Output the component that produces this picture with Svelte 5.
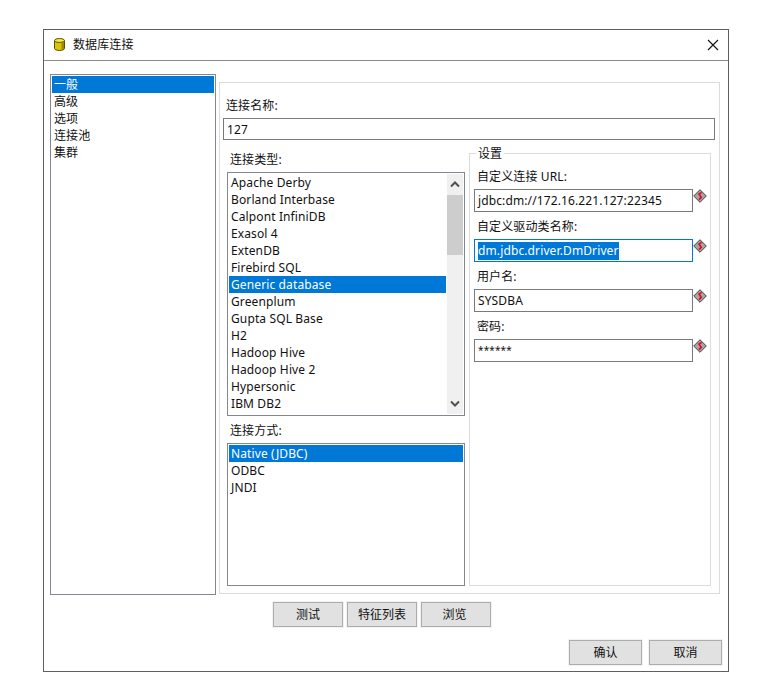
<script>
  const sections = ['一般', '高级', '选项', '连接池', '集群'];
  const drivers = ['Apache Derby','Borland Interbase','Calpont InfiniDB','Exasol 4','ExtenDB','Firebird SQL','Generic database','Greenplum','Gupta SQL Base','H2','Hadoop Hive','Hadoop Hive 2','Hypersonic','IBM DB2'];
  const methods = ['Native (JDBC)','ODBC','JNDI'];
  const fields = [
    { label: '自定义连接 URL:', value: 'jdbc:dm://172.16.221.127:22345' },
    { label: '自定义驱动类名称:', value: 'dm.jdbc.driver.DmDriver', active: true },
    { label: '用户名:', value: 'SYSDBA' },
    { label: '密码:', value: '******', mask: true }
  ];
</script>

<div class="window">
  <header class="title">
    <svg class="dbicon" width="11" height="13" viewBox="0 0 11 13">
      <path d="M.5 2.5v8c0 1.1 2.2 2 5 2s5-.9 5-2v-8z" fill="#dcc400" stroke="#5a5000" stroke-width="1"/>
      <path d="M7.5 4.5h2.5v6c0 .8-1 1.3-2.5 1.6z" fill="#9a8a00"/>
      <ellipse cx="5.5" cy="2.5" rx="5" ry="2" fill="#f7ea3a" stroke="#5a5000" stroke-width="1"/>
    </svg>
    <span>数据库连接</span>
    <svg class="close" width="12" height="12" viewBox="0 0 12 12">
      <path d="M1 1l10 10M11 1L1 11" stroke="#111" stroke-width="1.1" fill="none"/>
    </svg>
  </header>

  <div class="main">
    <ul class="list nav">
      {#each sections as s, i}
        <li class:sel={i === 0}>{s}</li>
      {/each}
    </ul>

    <section class="panel">
      <div class="namelabel">连接名称:</div>
      <div class="input nameinput">127</div>

      <div class="cols">
        <div class="leftcol">
          <div class="lab typelabel">连接类型:</div>
          <div class="list drivers">
            <ul>
              {#each drivers as d}
                <li class:sel={d === 'Generic database'}>{d}</li>
              {/each}
            </ul>
            <div class="scrollbar">
              <svg width="16" height="21" viewBox="0 0 16 21"><path d="M4 12.5l4-4 4 4" stroke="#505050" stroke-width="2" fill="none"/></svg>
              <div class="track"><div class="thumb"></div></div>
              <svg width="16" height="21" viewBox="0 0 16 21"><path d="M4 8.5l4 4 4-4" stroke="#505050" stroke-width="2" fill="none"/></svg>
            </div>
          </div>
          <div class="lab methodlabel">连接方式:</div>
          <ul class="list methods">
            {#each methods as m, i}
              <li class:sel={i === 0}>{m}</li>
            {/each}
          </ul>
        </div>

        <div class="group">
          <div class="legend">设置</div>
          {#each fields as f}
            <div class="field">
              <div class="flabel">{f.label}</div>
              <div class="frow">
                <div class="input" class:active={f.active} class:mask={f.mask}>
                  {#if f.active}<span class="selected">{f.value}</span>{:else}{f.value}{/if}
                </div>
                <svg class="req" width="14" height="14" viewBox="0 0 14 14">
                  <path d="M7 .7L13.3 7 7 13.3.7 7z" fill="#a6a6a6" stroke="#404040" stroke-width="1"/>
                  <path d="M8.6 3.4L6 5l2.2 3.4L6 10.6" fill="none" stroke="#d8121e" stroke-width="1.7"/>
                </svg>
              </div>
            </div>
          {/each}
        </div>
      </div>
    </section>
  </div>

  <div class="tools">
    <button>测试</button>
    <button>特征列表</button>
    <button>浏览</button>
  </div>

  <div class="footer">
    <button>确认</button>
    <button>取消</button>
  </div>
</div>

<style>
  :global(body) { margin: 0; background: #fff; }
  * { box-sizing: border-box; }
  ul { list-style: none; margin: 0; padding: 0; }
  .window {
    margin: 29px 0 0 43px;
    width: 686px;
    height: 643px;
    border: 1px solid #5f5f5f;
    background: #fff;
    font: 12px/17px "Noto Sans", "Noto Sans CJK SC", sans-serif;
    letter-spacing: .12px;
    color: #111;
    display: flex;
    flex-direction: column;
  }
  .title {
    height: 31px;
    flex: none;
    border-bottom: 1px solid #8c8c8c;
    display: flex;
    align-items: center;
    padding: 0 9px 1px 10px;
    gap: 8px;
  }
  .title span { flex: 1; }
  .dbicon { flex: none; }
  .main {
    display: flex;
    gap: 3px;
    padding: 13px 0 0 6px;
    height: 534px;
    flex: none;
    align-items: flex-start;
  }
  .list { border: 1px solid #828790; background: #fff; padding: 1px; }
  .nav { width: 166px; height: 521px; }
  .nav li { padding-left: 2px; height: 17px; }
  .sel { background: #0078d7; color: #fff; }
  .panel {
    width: 501px;
    height: 512px;
    margin-top: 8px;
    border: 1px solid #dcdcdc;
    padding: 13px 4px 0 3px;
  }
  .namelabel { padding-left: 3px; height: 22px; padding-top: 1px; }
  .input {
    border: 1px solid #7a7a7a;
    height: 23px;
    line-height: 22px;
    padding-left: 3px;
    white-space: nowrap;
    overflow: hidden;
    color: #111;
  }
  .nameinput { width: 492px; height: 22px; line-height: 21px; }
  .cols { display: flex; gap: 4px; padding-left: 4px; margin-top: 11px; }
  .leftcol { width: 238px; flex: none; }
  .lab { padding-left: 3px; }
  .typelabel { height: 21px; }
  .drivers { height: 244px; display: flex; align-items: stretch; }
  .drivers ul { flex: 1; }
  .drivers li, .methods li { padding-left: 2px; height: 17px; }
  .scrollbar { width: 16px; flex: none; background: #f0f0f0; display: flex; flex-direction: column; margin-left: 1px; }
  .scrollbar svg { flex: none; display: block; }
  .track { flex: 1; }
  .thumb { height: 60px; background: #cdcdcd; }
  .methodlabel { height: 22px; margin-top: 5px; padding-top: 1px; }
  .methods { height: 143px; }
  .group {
    position: relative;
    width: 242px;
    height: 433px;
    margin-top: 2px;
    border: 1px solid #dcdcdc;
    padding: 13px 0 0 4px;
  }
  .legend {
    position: absolute;
    top: -8px;
    left: 6px;
    padding: 0 2px;
    background: #fff;
    line-height: 16px;
  }
  .field { height: 50px; padding-top: 1px; }
  .flabel { padding-left: 3px; height: 21px; line-height: 17px; }
  .frow { display: flex; align-items: flex-start; }
  .frow .input { flex: none; width: 219px; }
  .req { flex: none; }
  .active { border-color: #0078d7; }
  .selected {
    background: #0078d7;
    color: #fff;
    display: inline-block;
    height: 18px;
    line-height: 18px;
    vertical-align: top;
    margin-top: 2px;
  }
  .mask { font-size: 10px; line-height: 20px; }
  .tools { display: flex; gap: 4px; padding: 7px 0 0 229px; flex: none; }
  .tools button:last-child { padding-right: 3px; }
  .footer { display: flex; justify-content: flex-end; gap: 7px; padding: 13px 6px 0 0; flex: none; }
  button {
    font: inherit;
    letter-spacing: 0;
    color: #111;
    width: 70px;
    height: 25px;
    padding: 0;
    background: #e1e1e1;
    border: 1px solid #adadad;
    border-radius: 0;
    box-shadow: 0 0 0 1px #f2f2f2;
  }
  .footer button { width: 73px; }
</style>
